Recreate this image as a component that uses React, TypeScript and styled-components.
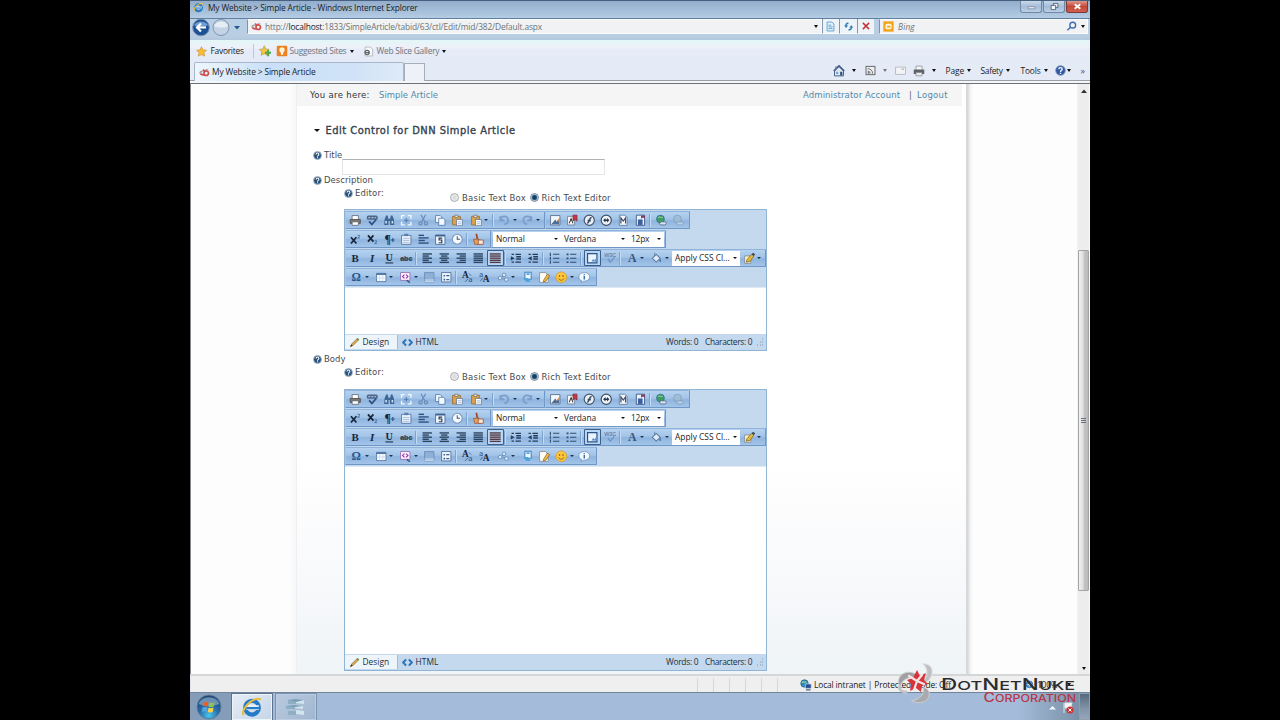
import React from "react";
import styled, { createGlobalStyle } from "styled-components";

const UI = `"Open Sans", "Noto Sans", sans-serif`;
const PAGE = `"DejaVu Sans", sans-serif`;

const Global = createGlobalStyle`
  * { box-sizing: border-box; }
  html, body { margin: 0; background: #000; overflow: hidden; }
  svg { display: block; flex: none; }
`;

const Screen = styled.div`
  width: 1280px;
  height: 720px;
  background: #000;
  display: flex;
  justify-content: center;
`;
const Desktop = styled.div`
  position: relative;
  width: 900px;
  height: 720px;
  display: flex;
  flex-direction: column;
  overflow: hidden;
  background: #fff;
  font-family: ${UI};
  font-size: 8.4px;
  color: #1b1b1b;
  white-space: nowrap;
`;
const Txt = styled.span<{ $w?: number; $size?: number; $ls?: number; $c?: string; $heavy?: boolean; $ml?: number }>`
  display: block;
  flex: none;
  line-height: 12px;
  width: ${(p) => (p.$w ? p.$w + "px" : "auto")};
  font-size: ${(p) => p.$size ?? 8.4}px;
  letter-spacing: ${(p) => p.$ls ?? 0}px;
  color: ${(p) => p.$c ?? "inherit"};
  ${(p) => p.$heavy && "-webkit-text-stroke: 0.35px currentColor;"}
  margin-left: ${(p) => p.$ml ?? 0}px;
`;
const Caret = styled.i<{ $c?: string; $s?: number; $ml?: number }>`
  flex: none;
  width: 0;
  height: 0;
  margin-left: ${(p) => p.$ml ?? 0}px;
  border: ${(p) => p.$s ?? 2.5}px solid transparent;
  border-top: ${(p) => (p.$s ?? 2.5) + 0.5}px solid ${(p) => p.$c ?? "#111"};
  border-bottom: 0;
`;

/* ---------- browser chrome ---------- */
const TitleBar = styled.div`
  height: 19px;
  flex: none;
  display: flex;
  align-items: flex-start;
  padding: 1px 2px 0 3px;
  border-top: 1px solid #46617f;
  border-bottom: 1px solid #61809f;
  background: linear-gradient(#93adcb, #b4cce4);
`;
const WinButtons = styled.div`
  margin-left: auto;
  margin-top: -1px;
  display: flex;
  gap: 1px;
`;
const WinButton = styled.div<{ $close?: boolean }>`
  width: 22px;
  height: 12px;
  display: flex;
  align-items: center;
  justify-content: center;
  border: 1px solid ${(p) => (p.$close ? "#7c3a36" : "#7189a5")};
  border-top: 0;
  border-radius: 0 0 3px 3px;
  background: ${(p) => (p.$close ? "linear-gradient(#dc9a8f,#c4483a 50%,#d0604c)" : "linear-gradient(#c9d9ea,#a5bdd8 50%,#bad0e6)")};
`;
const AddressRow = styled.div`
  height: 21px;
  flex: none;
  display: flex;
  align-items: flex-start;
  padding: 0 2px 0 1px;
  background: linear-gradient(#b8cfe6, #b9cee2 80%, #b3c8dc);
`;
const AddressBox = styled.div<{ $w: number; $ml?: number }>`
  width: ${(p) => p.$w}px;
  height: 15px;
  margin-left: ${(p) => p.$ml ?? 0}px;
  display: flex;
  align-items: center;
  padding-left: 3px;
  background: #f0f2f4;
  border: 1px solid #fbfdff;
  border-left-color: #7d93aa;
`;
const AddressButton = styled.div`
  width: 17.5px;
  height: 15px;
  display: flex;
  align-items: center;
  justify-content: center;
  background: #eef3f8;
  border-left: 1px solid #8197ad;
  border-bottom: 1px solid #fbfdff;
`;
const FavoritesRow = styled.div`
  height: 22px;
  flex: none;
  display: flex;
  align-items: center;
  padding: 0 0 0 6px;
  background: linear-gradient(#e3f7f7, #eef0fa 35%, #e5ebf7 45%, #e5ebf6);
`;
const Divider = styled.div<{ $ml?: number; $mr?: number; $h?: number; $c?: string }>`
  width: 1px;
  height: ${(p) => p.$h ?? 14}px;
  margin: 0 ${(p) => p.$mr ?? 0}px 0 ${(p) => p.$ml ?? 0}px;
  background: ${(p) => p.$c ?? "#bcc7d8"};
`;
const TabRow = styled.div`
  height: 22px;
  flex: none;
  display: flex;
  align-items: stretch;
  padding-left: 4px;
  background: #e5ebf6;
  border-bottom: 1px solid #6c7178;
  box-shadow: inset 0 -2px 0 #f4f6f8, inset 0 -3px 0 #9aa1a8;
`;
const Tab = styled.div`
  width: 210px;
  height: 19px;
  display: flex;
  align-items: center;
  padding-left: 4px;
  border: 1px solid #a8b6ca;
  border-bottom: 0;
  border-radius: 2px 2px 0 0;
  background: linear-gradient(90deg, #eef6fd, #c9e0f8 35%, #cfe2f7 75%, #dfeaf8);
`;
const NewTab = styled.div`
  width: 21px;
  height: 18px;
  margin-top: 1px;
  border: 1px solid #a5aebb;
  border-bottom: 0;
  background: #edf2f9;
`;
const Commands = styled.div`
  margin-left: auto;
  width: 257px;
  height: 17px;
  display: flex;
  align-items: center;
`;
const Slot = styled.div<{ $w: number }>`
  flex: none;
  width: ${(p) => p.$w}px;
  display: flex;
  align-items: center;
`;

/* ---------- page ---------- */
const Viewport = styled.div`
  height: 590px;
  flex: none;
  display: flex;
  border-left: 1px solid #85888c;
  border-right: 1px solid #fafafa;
  background: #fdfdfd;
`;
const LeftGutter = styled.div`
  width: 106px;
  flex: none;
  border-right: 1px solid #eeeff0;
  background: linear-gradient(90deg, #fdfdfd 94%, #f7f7f8);
`;
const Panel = styled.div`
  width: 669px;
  height: 590px;
  overflow: hidden;
  background: linear-gradient(#fff 64%, #f8f9fb 84%, #eff4f7);
  font-family: ${PAGE};
  font-size: 8.5px;
  color: #484c50;
`;
const RightGutter = styled.div`
  flex: 1;
  background: linear-gradient(90deg, #d6d7d8 0, #d9dadb 2px, #f1f1f1 4px, #fdfdfd 7px);
`;
const Scrollbar = styled.div`
  width: 12px;
  flex: none;
  display: flex;
  flex-direction: column;
  align-items: center;
  padding: 5px 0 4px;
  border-left: 1px solid #f3f3f3;
  background: #ededee;
`;
const ThumbTrack = styled.div`
  flex: 1;
  width: 100%;
  display: flex;
  flex-direction: column;
  padding-top: 157px;
`;
const Thumb = styled.div`
  height: 341px;
  width: 11px;
  border: 1px solid #a2a4a6;
  border-radius: 1px;
  display: flex;
  flex-direction: column;
  align-items: center;
  justify-content: center;
  gap: 1px;
  background: linear-gradient(90deg, #f2f2f2, #dedede 45%, #c2c3c5 60%, #b8babc);
`;
const Grip = styled.div`
  width: 5px;
  height: 1px;
  background: #6d7074;
`;
const Breadcrumb = styled.div`
  height: 22px;
  display: flex;
  align-items: center;
  padding-left: 13px;
  margin-right: 4px;
  background: #f5f5f6;
`;
const Heading = styled.div`
  height: 20px;
  margin-top: 14px;
  display: flex;
  align-items: center;
  padding: 1px 0 0 17px;
  color: #34424f;
`;
const LabelRow = styled.div<{ $left?: number; $h?: number; $top?: number }>`
  height: ${(p) => p.$h ?? 12}px;
  flex: none;
  display: flex;
  align-items: center;
  gap: 2.5px;
  padding-top: ${(p) => p.$top ?? 0}px;
  padding-left: ${(p) => p.$left ?? 15.5}px;
`;
const TitleField = styled.div`
  display: flex;
  height: 25px;
  margin-top: 9px;
`;
const TextInput = styled.div`
  width: 263px;
  height: 16px;
  margin-top: 10px;
  border: 1px solid #e3e5e7;
  border-top: 1px solid #b1b4b7;
  background: #fff;
`;
const EditorHead = styled.div<{ $h: number }>`
  height: ${(p) => p.$h}px;
  display: flex;
  align-items: flex-start;
  padding-left: 46.5px;
  margin-top: 1px;
`;
const RadioLine = styled.div`
  display: flex;
  align-items: center;
  height: 12px;
  margin-top: 5px;
`;
const Radio = styled.span<{ $on?: boolean }>`
  width: 9px;
  height: 9px;
  margin-top: -1px;
  border-radius: 50%;
  border: 1px solid ${(p) => (p.$on ? "#7d8b97" : "#a9adb1")};
  background: ${(p) => (p.$on ? "radial-gradient(circle, #173f63 0 1.8px, #6f9bbd 2.8px, #e4ebf0 3.4px)" : "radial-gradient(#d5d8da, #f2f3f4)")};
`;

/* ---------- rich text editor ---------- */
const EditorBox = styled.div<{ $h: number; $pad: number }>`
  width: 423px;
  height: ${(p) => p.$h}px;
  margin-left: 47px;
  padding-top: ${(p) => p.$pad}px;
  display: flex;
  flex-direction: column;
  border: 1px solid #8fb4d4;
  background: #c4d9ed;
`;
const ToolLine = styled.div`
  height: 19px;
  display: flex;
`;
const ToolGroup = styled.div<{ $w: number }>`
  width: ${(p) => p.$w}px;
  height: 18px;
  flex: none;
  display: flex;
  align-items: center;
  padding-left: 1px;
  border: 1px solid #7098c6;
  border-left-color: #a9c5e4;
  border-top-color: #8fb3da;
  border-radius: 1px;
  background: linear-gradient(#b5d2f0, #a3c4e8 45%, #8fb4de 55%, #a4c5ea);
`;
const ToolCell = styled.div<{ $w: number; $on?: boolean }>`
  flex: none;
  width: ${(p) => p.$w}px;
  height: 16px;
  display: flex;
  align-items: center;
  justify-content: center;
  ${(p) => p.$on && "box-shadow: inset 0 0 0 1px #3c5f8c; background: #b9d6f4; border-radius: 1px;"}
`;
const ToolSep = styled.div`
  flex: none;
  width: 4px;
  height: 13px;
  border-left: 1px solid #7da3cf;
  box-shadow: inset 1px 0 0 #c3dbf3;
`;
const Combo = styled.div<{ $w: number }>`
  flex: none;
  width: ${(p) => p.$w}px;
  height: 15px;
  display: flex;
  align-items: center;
  justify-content: space-between;
  padding: 0 3px 0 3px;
  background: #fff;
  color: #222;
  font-family: ${UI};
`;
const EditArea = styled.div`
  flex: 1;
  background: #fff;
  border-top: 1px solid #dfe9f2;
`;
const EditorFoot = styled.div`
  height: 16px;
  flex: none;
  display: flex;
  align-items: center;
  font-family: ${UI};
  color: #222f3d;
`;
const ModeTab = styled.div<{ $on?: boolean }>`
  height: 14px;
  width: ${(p) => (p.$on ? 53 : 50)}px;
  display: flex;
  align-items: center;
  gap: 2.5px;
  padding-left: 4px;
  border-right: ${(p) => (p.$on ? "1px solid #9dbbd8" : "0")};
  background: ${(p) => (p.$on ? "#edf4fa" : "transparent")};
`;

/* ---------- bottom ---------- */
const StatusBar = styled.div`
  height: 18px;
  flex: none;
  display: flex;
  align-items: center;
  padding-top: 1px;
  border-top: 2px solid #d5d6d8;
  border-left: 1px solid #dfe4ea;
  background: #efeff0;
`;
const TaskBar = styled.div`
  height: 28px;
  flex: none;
  display: flex;
  border-top: 1px solid #70849c;
  background: linear-gradient(90deg, #a4bcd9 92%, #8ba2bb 96%, #74899f);
`;
const StartArea = styled.div`
  width: 41px;
  display: flex;
  align-items: center;
  justify-content: center;
  padding-right: 4px;
  background: #869db9;
`;
const TaskButton = styled.div<{ $active?: boolean }>`
  width: 42px;
  margin-right: 2px;
  display: flex;
  align-items: center;
  justify-content: center;
  border: 1px solid ${(p) => (p.$active ? "#5d7390" : "#7c93af")};
  border-bottom: 0;
  box-shadow: inset 0 0 0 1px ${(p) => (p.$active ? "#eef4fa" : "#bccde0")};
  background: ${(p) => (p.$active ? "linear-gradient(135deg,#e6edf6,#c5d5e8)" : "linear-gradient(135deg,#b9cadf,#a0b6d0)")};
`;
const Tray = styled.div`
  margin-left: auto;
  width: 54px;
  display: flex;
  align-items: center;
  justify-content: flex-end;
  gap: 7px;
  padding: 2px 5px 0 0;
`;
const ShowDesktop = styled.div`
  width: 11px;
  border: 1px solid #8f9fb0;
  background: linear-gradient(#55687c, #8295a9 60%, #93a6ba);
`;

const Brand = styled.div`
  position: absolute;
  left: 706px;
  top: 660px;
  width: 194px;
  height: 48px;
  display: flex;
`;
const BrandWords = styled.div`
  flex: 1;
  padding-top: 18px;
`;
const BrandLine = styled.div<{ $c: string; $size: number; $sx: number; $lh: number }>`
  width: 100%;
  padding-right: 13px;
  text-align: right;
  font-family: "Inter", sans-serif;
  font-weight: 500;
  font-size: ${(p) => p.$size}px;
  line-height: ${(p) => p.$lh}px;
  color: ${(p) => p.$c};
  transform: scaleX(${(p) => p.$sx});
  transform-origin: 143px 50%;
  big { font-size: 1.25em; line-height: 1px; }
`;

/* ---------- icons ---------- */
const lines = (rows: [number, number][], c = "#2c4563", y0 = 2.5, gap = 2.7) =>
  rows.map(([x, w], i) => <path key={i} d={`M${x} ${y0 + i * gap}h${w}`} stroke={c} strokeWidth={1.8} />);

const glyph = (t: string, extra: React.SVGProps<SVGTextElement> = {}) => (
  <text x={8} y={12.5} textAnchor="middle" fontFamily="Liberation Serif, serif" fontWeight={700} fontSize={14} fill="#16263c" {...extra}>
    {t}
  </text>
);
const page = <path d="M3 1.5h7l3 3v10H3z" fill="#f5f9fe" stroke="#55749b" strokeWidth={1} />;

const art: Record<string, React.ReactNode> = {
  print: (<g><path d="M4 7V2h8v5" fill="#fff" stroke="#5b6672" /><path d="M1.500 7h13v5h-13z" fill="#80796f" stroke="#4c4a48" /><path d="M4 10h8v4.500H4z" fill="#fff" stroke="#5b6672" /></g>),
  spell: (<g><rect x={1} y={2} width={14} height={5.500} rx={2} fill="#4d668a" /><path d="M3 4.700h10" stroke="#a9bfdb" strokeDasharray="2.500 1.500" strokeWidth={1.600} /><path d="M4 9.500l3.500 4L13 7" fill="none" stroke="#2b4f80" strokeWidth={2.200} /></g>),
  find: (<g fill="#3f6694"><path d="M2 7l2-5h2l1 5v7H1.500zM14 7l-2-5h-2L9 7v7h5.500z" /><path d="M6.500 6h3v3h-3z" /><path d="M3 9h2v3H3zM11 9h2v3h-2z" fill="#cfe1f5" /></g>),
  select: (<g fill="none" stroke="#f2f8ff" strokeWidth={1.700}><path d="M2 6V2h4M10 2h4v4M14 10v4h-4M6 14H2v-4" /><path d="M5 8h6M8 5v6" stroke="#4f79ab" strokeWidth={1.200} /></g>),
  cut: (<g fill="none" stroke="#6a8cb8" strokeWidth={1.600}><path d="M5 1l5 9M11 1L6 10" /><circle cx={4.500} cy={12} r={2} /><circle cx={11.500} cy={12} r={2} /></g>),
  copy: (<g fill="#f4f9ff" stroke="#4c73a5"><path d="M2 2h6l2 2v7H2z" /><path d="M6 5.500h6l2 2v7H6z" /></g>),
  paste: (<g><path d="M2 3h10v11H2z" fill="#dca24c" stroke="#9c6a22" /><path d="M5 1.500h4v3H5z" fill="#f2e6c8" stroke="#777" /><path d="M7 7h7.500v8H7z" fill="#fff" stroke="#5d7698" /><path d="M8.500 10h4.500M8.500 12.500h4.500" stroke="#8da7c6" /></g>),
  undo: (<path d="M3 8a5 5 0 1 1 5 5M3 3v5h5" fill="none" stroke="#7b9dca" strokeWidth={2.400} />),
  redo: (<path d="M13 8a5 5 0 1 0-5 5M13 3v5H8" fill="none" stroke="#7b9dca" strokeWidth={2.400} />),
  image: (<g><path d="M2 2h12v12H2z" fill="#f3f8fd" stroke="#4d6180" /><path d="M3 13l5-6 2 3 3-4v7z" fill="#4f6d95" /><path d="M10 9l4-5v6z" fill="#d98b4a" /></g>),
  docs: (<g><path d="M2 3h9v11H2z" fill="#fbfdff" stroke="#65748c" /><path d="M9 1.500h5V9l-2.500-2L9 9z" fill="#c23a48" stroke="#8c2430" /><path d="M4 12l2.500-6L9 12" fill="none" stroke="#333" strokeWidth={1.300} /></g>),
  flash: (<g><circle cx={8} cy={8} r={6.500} fill="#e8eff7" stroke="#43546b" strokeWidth={1.500} /><path d="M5.500 12C8 11 8 4.500 11 4.500M6 8.500h4" fill="none" stroke="#36475e" strokeWidth={2} /></g>),
  media: (<g><circle cx={8} cy={8} r={6.500} fill="#f0f4f9" stroke="#3d4d64" strokeWidth={1.500} /><path d="M4 8l3-3v2h2V5l3 3-3 3V9H7v2z" fill="#25364e" /></g>),
  template: (<g>{page}<path d="M5 12V5l3 4 3-4v7" fill="none" stroke="#40506b" strokeWidth={1.600} /></g>),
  save: (<g><path d="M3 1.500h10.500v13H3z" fill="#eef3fa" stroke="#2c4776" /><path d="M5 14V7h6v7" fill="#3c5fa2" /><path d="M9 2h5v4l-2.500-1.500L9 6z" fill="#7b3e66" /></g>),
  link: (<g><circle cx={7} cy={6.500} r={5} fill="#3f9d62" stroke="#2a6f9a" /><path d="M4 5c2-3 4 1 6-1" stroke="#bfe8c4" fill="none" /><rect x={6} y={10} width={8.500} height={4} rx={2} fill="#d9e4f0" stroke="#47617f" /></g>),
  unlink: (<g opacity={0.750}><circle cx={7} cy={6.500} r={5} fill="#a1bbcf" stroke="#6e93b4" /><rect x={6} y={10} width={8.500} height={4} rx={2} fill="#c3d6e8" stroke="#6b8fb3" /></g>),
  sup: (<g><path d="M2.500 5.500l7 8M9.500 5.500l-7 8" stroke="#16263c" strokeWidth={2.200} /><path d="M11 3h2.500v1.500L11 6.500h3" fill="none" stroke="#3b679a" /></g>),
  sub: (<g><path d="M2.500 3l7 8M9.500 3l-7 8" stroke="#16263c" strokeWidth={2.200} /><path d="M11 10h2.500v1.500L11 13.500h3" fill="none" stroke="#3b679a" /></g>),
  para: (<g>{glyph("¶", { x: 6, fontSize: 15 })}<path d="M10 9h5M12.500 6.500v5" stroke="#35567f" strokeWidth={1.500} /></g>),
  pasteText: (<g><path d="M2 3h12v11.500H2z" fill="#e9f1fa" stroke="#456a9e" /><path d="M5.500 1h5v3h-5z" fill="#5a7eb0" /><path d="M4 7h8M4 9.500h8M4 12h8" stroke="#9db7d6" /></g>),
  hr: (<g>{lines([[2, 7], [2, 13], [2, 8], [2, 13]], "#2d527f", 3, 3.300)}</g>),
  date: (<g><path d="M2 2.500h12v12H2z" fill="#f2f7fd" stroke="#3c6090" /><path d="M2 3.500h12" stroke="#3c6090" strokeWidth={2} /><path d="M10.500 6.500H6.500v2.500h3.500v3.500H6" fill="none" stroke="#273c5c" strokeWidth={1.500} /></g>),
  time: (<g><circle cx={8} cy={8} r={6.300} fill="#f6fafe" stroke="#7793b6" strokeWidth={1.300} /><path d="M8 4v4h3.500" fill="none" stroke="#335784" strokeWidth={1.300} /></g>),
  clean: (<g><path d="M5.500 1l1.500 7" stroke="#a04a2e" strokeWidth={2.200} /><path d="M2 8h7l2 6.500H3.500z" fill="#e3a25b" stroke="#9d5a2c" /><path d="M8 9h6.500v5.500H8z" fill="#f7e9dd" stroke="#a14f35" /></g>),
  bold: glyph("B"),
  italic: glyph("I", { fontStyle: "italic" }),
  underline: (<g>{glyph("U", { y: 11, fontSize: 13 })}<path d="M3 14h10" stroke="#16263c" strokeWidth={1.300} /></g>),
  strike: (<g><text x={8} y={12} textAnchor="middle" fontSize={9} fontWeight={700} fontFamily="Liberation Sans, sans-serif" fill="#2b3a50">abc</text><path d="M0 9h16" stroke="#2b3a50" /></g>),
  left: <g>{lines([[2, 12], [2, 8], [2, 12], [2, 8], [2, 12]])}</g>,
  center: <g>{lines([[2, 12], [4, 8], [2, 12], [4, 8], [2, 12]])}</g>,
  right: <g>{lines([[2, 12], [6, 8], [2, 12], [6, 8], [2, 12]])}</g>,
  full: <g>{lines([[2, 12], [2, 12], [2, 12], [2, 12], [2, 12]])}</g>,
  none: <g>{lines([[1, 14], [1, 14], [1, 14], [1, 14], [1, 14]], "#553a44")}</g>,
  indent: (<g><path d="M2 3h3M7 3h7M8 6h6M8 9h6M2 13h3M7 13h7" stroke="#243c5c" strokeWidth={1.800} /><path d="M1 5.500L6 8l-5 3z" fill="#243c5c" /></g>),
  outdent: (<g><path d="M2 3h3M7 3h7M8 6h6M8 9h6M2 13h3M7 13h7" stroke="#243c5c" strokeWidth={1.800} /><path d="M6 5.500L1 8l5 3z" fill="#243c5c" /></g>),
  ol: (<g stroke="#304c70"><path d="M6.500 3h8M6.500 8h8M6.500 13h8" strokeWidth={1.300} /><path d="M3 1v4M3 6v4M3 11v4" strokeWidth={1.400} /></g>),
  ul: (<g><path d="M6.500 3h8M6.500 8h8M6.500 13h8" stroke="#304c70" strokeWidth={1.300} /><path d="M2 2h2.500v2.200H2zM2 7h2.500v2.200H2zM2 12h2.500v2.200H2z" fill="#304c70" /></g>),
  borders: (<g><path d="M2 2h12v12H2z" fill="#eaf4ff" stroke="#2a5488" strokeWidth={1.500} /><path d="M7 12l2-3 2 1.500 3-4v6z" fill="#6592c6" /></g>),
  xhtml: (<g><text x={8} y={7} textAnchor="middle" fontSize={7} fontFamily="Liberation Sans, sans-serif" fill="#4b6c96">W3C</text><path d="M5 9l3 4 5-6" stroke="#7195c3" strokeWidth={1.800} fill="none" /></g>),
  fore: glyph("A", { fill: "#37557d", fontSize: 15 }),
  back: (<g><path d="M3 8l5-5 5 5-5 5z" fill="#e2ecf7" stroke="#53769f" strokeWidth={1.300} /><path d="M13 8c2 3 1 5 0 5s-1.500-2 0-5z" fill="#4b79ac" /><path d="M6 5V1" stroke="#53769f" /></g>),
  brush: (<g><path d="M2 5h8v9.500H2z" fill="#f9eec1" stroke="#7c8898" /><path d="M5 10l6-7 3 2-5 7-5 1z" fill="#e5b93f" stroke="#7c6838" /><path d="M11 3l2-2 2.500 2-2 2z" fill="#3c4858" /></g>),
  omega: glyph("Ω", { fill: "#23588e", fontSize: 15 }),
  table: (<g><path d="M2 3h12v10.500H2z" fill="#f6faff" stroke="#456b9b" /><path d="M2 4h12" stroke="#456b9b" strokeWidth={2} /><path d="M6 5v8.500M10 5v8.500M2 9h12" stroke="#c1d4e9" strokeWidth={0.800} /></g>),
  code: (<g><path d="M2 2h12v10H2z" fill="#fbf4fd" stroke="#8964ad" /><path d="M7 4.500L4.500 7 7 9.500M9 4.500L11.500 7 9 9.500" fill="none" stroke="#a32cae" strokeWidth={1.400} /><path d="M10 12l4 3" stroke="#35567f" strokeWidth={1.800} /></g>),
  group: (<g><path d="M2 2h12v12H2z" fill="#8fb0d6" stroke="#6487b4" /><path d="M2 11.500h12M2 13.500h12" stroke="#dce9f7" /></g>),
  form: (<g><path d="M2 2h12v12H2z" fill="#eff5fc" stroke="#3c6294" /><path d="M4.500 5h2v2h-2zM4.500 10h2v2h-2z" fill="#3c6294" /><path d="M8 6h4M8 11h4" stroke="#3c6294" strokeWidth={1.500} /></g>),
  upper: (<g>{glyph("A", { x: 5.5, y: 9.5, fontSize: 12 })}<text x={12} y={14.500} textAnchor="middle" fontSize={9} fill="#2f5179">a</text><path d="M9 10l-4 4M10 3l3 3" stroke="#335a86" /></g>),
  lower: (<g>{glyph("A", { x: 10.5, y: 13.5, fontSize: 12 })}<text x={4} y={7.500} textAnchor="middle" fontSize={9} fill="#2f5179">a</text><path d="M6 9l-3 4" stroke="#335a86" /></g>),
  snippets: (<g fill="#dceaf7" stroke="#5f84b0"><circle cx={4} cy={9} r={2.300} /><circle cx={9} cy={5} r={2.300} /><circle cx={12} cy={11} r={2.300} /><path d="M6 7.500l1.500-1M7 10h3" /></g>),
  module: (<g><path d="M5 1.500h8v9H5z" fill="#f0f8ff" stroke="#3d82bf" strokeWidth={1.300} /><path d="M7 4h4" stroke="#4a96d5" strokeWidth={2} /><path d="M3 9l4 5h5l-3-5z" fill="#4ba4dc" /></g>),
  edit: (<g><path d="M2 2h8l3 4v8.500H2z" fill="#fffdf4" stroke="#808890" /><path d="M7 12l5-8 3 2-5 7-3 1z" fill="#f0b842" stroke="#8b6a30" /></g>),
  smile: (<g><circle cx={8} cy={8} r={6.800} fill="#ffc83a" stroke="#dc9722" /><circle cx={5.800} cy={6.500} r={1} fill="#6b4814" /><circle cx={10.200} cy={6.500} r={1} fill="#6b4814" /><path d="M4.500 9.500c1.500 3 5.500 3 7 0" fill="none" stroke="#6b4814" /></g>),
  about: (<g><path d="M8 2c4 0 7 2 7 5.500S12 13 8 13H7l-3 2 .5-3C2 11.500 1 9.500 1 7.500 1 4 4 2 8 2z" fill="#f3f9ff" stroke="#6d90ba" /><path d="M8 4v1.500M8 6.500v4.500" stroke="#2b64a4" strokeWidth={1.700} /></g>),
  help: (<g><circle cx={8} cy={8} r={7} fill="#27517b" stroke="#a9bccb" strokeWidth={1.500} /><path d="M5.500 6c0-3 5-3 5 0 0 2-2.500 1.500-2.500 4M8 11.300v1.700" fill="none" stroke="#fff" strokeWidth={1.800} /></g>),
  pencil: (<g><path d="M2 14l2-4 8-8 2.200 2-8 8z" fill="#dfa94b" stroke="#846238" strokeWidth={0.900} /><path d="M2 14l1.200-3 2 1.800z" fill="#222" /><path d="M11 3l1.500-1.500 2.200 2L13.300 5z" fill="#5e8f4a" /></g>),
  html: (<path d="M6 3.500L1.800 8 6 12.500M10 3.500L14.200 8 10 12.500" fill="none" stroke="#2f76b8" strokeWidth={3} />),
  ie: (<g><circle cx={8} cy={8.500} r={5} fill="none" stroke="#257bc5" strokeWidth={3} /><path d="M4 8.500h9" stroke="#fff" strokeWidth={3.400} /><path d="M4 8.800h9.800" stroke="#257bc5" strokeWidth={1.800} /><path d="M2 14C-1 10 9 0 14.500 2.500" fill="none" stroke="#e9bd3d" strokeWidth={1.500} /></g>),
  dnn: (<g fill="none" stroke="#cf4b4b" strokeWidth={2.400}><circle cx={10.500} cy={9} r={3.300} /><path d="M6 3.500L8 6" /><path d="M1.500 9.500a3 3 0 0 1 4-3" stroke="#a2a4a8" /><path d="M9.500 3.800a3 3 0 0 1 4 1" stroke="#b3b5b9" strokeWidth={1.500} /><path d="M2 10l5 2" /></g>),
  star: (<path d="M8 1l2.200 4.600 5 .7-3.600 3.500.9 5L8 12.500l-4.500 2.300.9-5L.8 6.300l5-.7z" fill="#f8bd35" stroke="#c98a24" strokeWidth={0.800} />),
  starAdd: (<g><path d="M7 1l2 4.300 4.500.6-3.200 3.200.7 4.600L7 11.500l-4 2.200.7-4.600L.5 5.900 5 5.300z" fill="#f4c545" stroke="#a69238" strokeWidth={0.800} /><path d="M8 9h3V6.500h2.500V9H16v2.700h-2.500V15H11v-3.300H8z" fill="#4aa84a" /></g>),
  suggested: (<g><rect x={1} y={1} width={14} height={14} rx={1.500} fill="#ee8020" /><circle cx={8} cy={6.500} r={3.500} fill="#fff3d4" /><path d="M6.500 9h3v4h-3z" fill="#fff" /></g>),
  slice: (<g><path d="M3 1.500h8l3 3v10H3z" fill="#f9fafb" stroke="#a1a5ab" /><circle cx={6} cy={9.500} r={3} fill="none" stroke="#5b6067" strokeWidth={1.900} /><path d="M4 9.500h5" stroke="#5b6067" strokeWidth={1.500} /></g>),
  compat: (<g><path d="M3 1.500h7l3 3v10H3z" fill="#e2f2fc" stroke="#5d9bca" strokeWidth={1.300} /><path d="M5 6h4M5 8.500h6M5 11h6" fill="none" stroke="#5d9bca" strokeWidth={1.300} /></g>),
  refresh: (<g fill="none" stroke="#347cb9" strokeWidth={2.200}><path d="M8 3.500C5 3 4 5 4.500 8" /><path d="M8 12.500c3 1 5-1.500 4-5" /><path d="M1.500 6.500h6L4.500 10zM9 9.500h6L12 6z" fill="#347cb9" stroke="none" /></g>),
  stop: (<path d="M3 3l10 10M13 3L3 13" stroke="#c5343b" strokeWidth={2.300} />),
  bing: (<g><rect x={0.500} y={0.500} width={15} height={15} fill="#f5a51d" /><rect x={3.500} y={4} width={9} height={8} rx={2.500} fill="#fff6df" /><rect x={6} y={7} width={5} height={2.500} fill="#f5a51d" /></g>),
  search: (<g fill="none" stroke="#3c6db0" strokeWidth={2}><circle cx={9.800} cy={6} r={4.200} /><path d="M6.500 9L2 13.500" /></g>),
  zoom: (<g><circle cx={7} cy={7} r={5.500} fill="#4d95d3" stroke="#2f6aa8" /><path d="M4 7h6M7 4v6" stroke="#fff" strokeWidth={1.500} /><path d="M11 11l3.500 3.500" stroke="#7f8790" strokeWidth={2.400} /></g>),
  home: (<g><path d="M2 8l6-6 6 6v6.500H2z" fill="#dfe7f2" stroke="#44618c" strokeWidth={1.300} /><path d="M1 8l7-7 7 7" fill="none" stroke="#3d5a87" strokeWidth={2} /><path d="M4 2v4" stroke="#6b7688" strokeWidth={2} /><path d="M9.500 9h3v5h-3z" fill="#31517e" /><path d="M4 9h3v3H4z" fill="#7fa3cf" /></g>),
  feed: (<g><rect x={1.500} y={2} width={13} height={12} fill="#eeeeee" stroke="#6a6c70" strokeWidth={1.500} /><path d="M4 5.500a6.500 6.500 0 0 1 7 7M4 9a3.300 3.300 0 0 1 3.500 3.500" fill="none" stroke="#6a6c70" strokeWidth={1.400} /><circle cx={5} cy={11.500} r={1.200} fill="#6a6c70" /></g>),
  mail: (<g><rect x={1} y={3} width={14} height={10.500} fill="#f3f4f6" stroke="#a4a8ad" /><path d="M9.500 6h3.500" stroke="#a4a8ad" strokeWidth={1.600} /></g>),
  printer: (<g><path d="M4 6V1.500h8V6" fill="#f8f8f8" stroke="#878a8f" /><path d="M1 6h14v6H1z" fill="#5d6268" /><path d="M4 10h8v4.500H4z" fill="#e9eaec" stroke="#878a8f" /></g>),
  helpBig: (<g><circle cx={8} cy={8} r={7} fill="#3059a8" stroke="#8194b5" strokeWidth={1.200} /><path d="M5.500 6c0-3 5-3 5 0 0 2-2.500 1.500-2.500 4M8 11.300v1.700" fill="none" stroke="#fff" strokeWidth={1.900} /></g>),
  intranet: (<g><circle cx={6} cy={6} r={5} fill="#2e8bb8" stroke="#1d5d95" /><path d="M2.500 5c2-3 4 1 6-1.500" stroke="#a5dd8c" strokeWidth={1.500} fill="none" /><rect x={7} y={6.500} width={8} height={6} rx={1} fill="#2b4d96" stroke="#d4e0ee" /><path d="M8 14.500h6" stroke="#456" strokeWidth={1.500} /></g>),
  restore: (<g fill="#f2f6fa" stroke="#4a5c72" strokeWidth={1.500}><path d="M6 2.500h8v7H6z" /><path d="M2 6h8v7.500H2z" /></g>),
  close: (<path d="M3 4l10 8M13 4L3 12" stroke="#fff" strokeWidth={3} />),
  minimize: (<path d="M2 8.500h12v3.500H2z" fill="#f8fafc" stroke="#53667e" />),
};

const Icon = ({ n, s = 12 }: { n: string; s?: number }) => (
  <svg width={s} height={s} viewBox="0 0 16 16">{art[n]}</svg>
);

type Tool = { n: string; w: number; on?: boolean; menu?: boolean };
const t = (n: string, w = 17, on?: boolean): Tool => ({ n, w, on });
const m = (n: string, w: number): Tool => ({ n, w, menu: true });
const SEP: Tool = { n: "|", w: 4 };

const Tools = ({ items }: { items: Tool[] }) => (
  <>
    {items.map((it, i) =>
      it.n === "|" ? (
        <ToolSep key={i} />
      ) : (
        <ToolCell key={i} $w={it.w} $on={it.on}>
          <Icon n={it.n} s={12.5} />
          {it.menu && <Caret $s={2} $ml={2} $c="#1c3352" />}
        </ToolCell>
      )
    )}
  </>
);

const RichEditor = ({ height, pad = 0 }: { height: number; pad?: number }) => (
  <EditorBox $h={height} $pad={pad}>
    <ToolLine>
      <ToolGroup $w={200}>
        <Tools items={[t("print"), t("spell"), t("find"), t("select"), t("cut"), t("copy"), t("paste"), m("paste", 26), SEP, m("undo", 23), m("redo", 23)]} />
      </ToolGroup>
      <ToolGroup $w={145}>
        <Tools items={[t("image"), t("docs"), t("flash"), t("media"), t("template"), t("save"), SEP, t("link"), t("unlink")]} />
      </ToolGroup>
    </ToolLine>
    <ToolLine>
      <ToolGroup $w={146}>
        <Tools items={[t("sup"), t("sub"), t("para"), t("pasteText"), t("hr"), t("date"), t("time"), SEP, t("clean")]} />
      </ToolGroup>
      <ToolGroup $w={175}>
        <Combo $w={68}><Txt $ls={-0.1}>Normal</Txt><Caret $s={2} /></Combo>
        <Combo $w={67}><Txt $ls={-0.1}>Verdana</Txt><Caret $s={2} /></Combo>
        <Combo $w={36}><Txt $ls={-0.2}>12px</Txt><Caret $s={2} /></Combo>
      </ToolGroup>
    </ToolLine>
    <ToolLine>
      <ToolGroup $w={421}>
        <Tools items={[t("bold"), t("italic"), t("underline"), t("strike"), SEP, t("left"), t("center"), t("right"), t("full"), t("none", 17, true), SEP, t("indent"), t("outdent"), SEP, t("ol"), t("ul"), SEP, t("borders", 17, true), t("xhtml", 18), SEP, m("fore", 24), m("back", 25)]} />
        <Combo $w={68}><Txt $ls={0}>Apply CSS Cl...</Txt><Caret $s={2} /></Combo>
        <Tools items={[m("brush", 24)]} />
      </ToolGroup>
    </ToolLine>
    <ToolLine>
      <ToolGroup $w={252}>
        <Tools items={[m("omega", 25), m("table", 24), m("code", 25), t("group"), t("form"), SEP, t("upper"), t("lower"), m("snippets", 26), t("module"), t("edit"), m("smile", 23), t("about")]} />
      </ToolGroup>
    </ToolLine>
    <EditArea />
    <EditorFoot>
      <ModeTab $on><Icon n="pencil" s={11} /><Txt>Design</Txt></ModeTab>
      <ModeTab><Icon n="html" s={11} /><Txt $ls={0.1}>HTML</Txt></ModeTab>
      <Txt $w={39} $ml={218} $ls={-0.28}>Words: 0</Txt>
      <Txt $w={51} $ls={-0.33}>Characters: 0</Txt>
      <svg width={8} height={8} viewBox="0 0 8 8"><path d="M6 1h1M4 4h1M6 4h1M1 7h1M4 7h1M6 7h1" stroke="#7f9ab7" strokeWidth={1.200} /></svg>
    </EditorFoot>
  </EditorBox>
);

const EditorHeader = ({ h }: { h: number }) => (
  <EditorHead $h={h}>
    <LabelRow $left={0}><Icon n="help" s={9} /><Txt $w={95} $size={8.5} $ls={0.15}>Editor:</Txt></LabelRow>
    <RadioLine>
      <Radio /><Txt $w={68} $ml={3} $size={8.5} $ls={0.22}>Basic Text Box</Txt>
      <Radio $on /><Txt $ml={2.5} $size={8.5} $ls={0.2}>Rich Text Editor</Txt>
    </RadioLine>
  </EditorHead>
);

export default function App() {
  return (
    <Screen>
      <Global />
      <Desktop>
        <TitleBar>
          <Icon n="ie" s={11} />
          <Txt $ml={4} $ls={-0.17}>My Website &gt; Simple Article - Windows Internet Explorer</Txt>
          <WinButtons>
            <WinButton><Icon n="minimize" s={9} /></WinButton>
            <WinButton><Icon n="restore" s={9} /></WinButton>
            <WinButton $close><Icon n="close" s={9} /></WinButton>
          </WinButtons>
        </TitleBar>
        <AddressRow>
          <svg width={56} height={18} viewBox="0 0 56 18">
            <circle cx={10} cy={8.500} r={8.300} fill="#1d4f94" stroke="#7490b0" />
            <path d="M3 6a8 7 0 0 1 14 0c-4 3-9 3-14 0z" fill="#6e9bd0" />
            <path d="M15 8.500H6M10 4.500L6 8.500l4 4" fill="none" stroke="#fff" strokeWidth={2.200} />
            <circle cx={30} cy={8.500} r={8} fill="#c3d3e4" stroke="#7f95ad" />
            <path d="M23 7a7.500 6.500 0 0 1 14 0c-4 2-9 2-14 0z" fill="#e5edf5" />
            <path d="M43 7h6l-3 3.500z" fill="#245a91" />
          </svg>
          <AddressBox $w={575}>
            <Icon n="dnn" s={11} />
            <Txt $w={549} $ml={3} $c="#6d7276" $ls={-0.155}>http://<span style={{ color: "#222" }}>localhost</span>:1833/SimpleArticle/tabid/63/ctl/Edit/mid/382/Default.aspx</Txt>
            <Caret />
          </AddressBox>
          <AddressButton><Icon n="compat" s={11} /></AddressButton>
          <AddressButton><Icon n="refresh" s={11} /></AddressButton>
          <AddressButton><Icon n="stop" s={10} /></AddressButton>
          <AddressBox $w={209} $ml={5}>
            <Icon n="bing" s={11} />
            <Txt $w={168} $ml={4} $c="#70757a" $ls={0.1}><i>Bing</i></Txt>
            <Icon n="search" s={11} />
            <Caret $ml={4} />
          </AddressBox>
        </AddressRow>
        <FavoritesRow>
          <Icon n="star" s={11} />
          <Txt $w={37} $ml={3.5} $ls={-0.25}>Favorites</Txt>
          <Divider $ml={5} $mr={5} />
          <Icon n="starAdd" s={12} />
          <Slot $w={5} />
          <Icon n="suggested" s={12} />
          <Txt $w={59} $ml={2} $c="#6f757d" $ls={-0.27}>Suggested Sites</Txt>
          <Caret $ml={1.5} />
          <Slot $w={8.5} />
          <Icon n="slice" s={11} />
          <Txt $w={65.5} $ml={3} $c="#6f757d" $ls={-0.23}>Web Slice Gallery</Txt>
          <Caret $ml={0} />
        </FavoritesRow>
        <TabRow>
          <Tab><Icon n="dnn" s={11} /><Txt $ml={2} $ls={-0.15}>My Website &gt; Simple Article</Txt></Tab>
          <NewTab />
          <Commands>
            <Slot $w={19}><Icon n="home" s={12} /></Slot>
            <Slot $w={13}><Caret /></Slot>
            <Slot $w={18}><Icon n="feed" s={11} /></Slot>
            <Slot $w={12}><Caret $c="#777" /></Slot>
            <Slot $w={18}><Icon n="mail" s={11} /></Slot>
            <Slot $w={19}><Icon n="printer" s={12} /></Slot>
            <Slot $w={13.5}><Caret /></Slot>
            <Slot $w={35}><Txt $w={20} $ls={-0.1}>Page</Txt><Caret $ml={1} /></Slot>
            <Slot $w={40}><Txt $w={24} $ls={-0.3}>Safety</Txt><Caret $ml={1.5} /></Slot>
            <Slot $w={34}><Txt $w={22} $ls={-0.15}>Tools</Txt><Caret $ml={1.5} /></Slot>
            <Slot $w={26}><Icon n="helpBig" s={11} /><Caret $ml={1.5} /></Slot>
            <Slot $w={8}><Txt $c="#555" $size={9} style={undefined}>»</Txt></Slot>
          </Commands>
        </TabRow>
        <Viewport>
          <LeftGutter />
          <Panel>
            <Breadcrumb>
              <Txt $w={69} $size={8.5} $ls={0.3} $c="#30353a">You are here:</Txt>
              <Txt $w={424} $size={8.5} $c="#5089aa">Simple Article</Txt>
              <Txt $w={106} $size={8.5} $ls={0.1} $c="#5089aa">Administrator Account</Txt>
              <Txt $w={8} $size={8.5} $c="#666">|</Txt>
              <Txt $size={8.5} $ls={0.3} $c="#5089aa">Logout</Txt>
            </Breadcrumb>
            <Heading>
              <Caret $s={3} />
              <Txt $ml={5.5} $size={9.9} $ls={0.52} $heavy>Edit Control for DNN Simple Article</Txt>
            </Heading>
            <TitleField>
              <LabelRow><Icon n="help" s={9} /><Txt $w={18} $size={8.5}>Title</Txt></LabelRow>
              <TextInput />
            </TitleField>
            <LabelRow><Icon n="help" s={9} /><Txt $size={8.5} $ls={0.05}>Description</Txt></LabelRow>
            <EditorHeader h={22} />
            <RichEditor height={142} pad={1} />
            <LabelRow $h={14} $top={2}><Icon n="help" s={9} /><Txt $size={8.5}>Body</Txt></LabelRow>
            <EditorHeader h={23} />
            <RichEditor height={282} />
          </Panel>
          <RightGutter />
          <Scrollbar>
            <svg width={6} height={4} viewBox="0 0 6 4"><path d="M0 4l3-3.500L6 4z" fill="#333" /></svg>
            <ThumbTrack><Thumb><Grip /><Grip /><Grip /></Thumb></ThumbTrack>
            <Caret />
          </Scrollbar>
        </Viewport>
        <StatusBar>
          <Slot $w={506} />
          <Divider $mr={15} $c="#d6d7d9" /><Divider $mr={15} $c="#d6d7d9" /><Divider $mr={15} $c="#d6d7d9" /><Divider $mr={15} $c="#d6d7d9" /><Divider $mr={15} $c="#d6d7d9" /><Divider $mr={15} $c="#d6d7d9" />
          <Slot $w={7} />
          <Icon n="intranet" s={12} />
          <Txt $w={211} $ml={2} $ls={-0.13}>Local intranet | Protected Mode: Off</Txt>
          <Icon n="zoom" s={10} />
          <Txt $w={30} $ml={2} $ls={-0.2}>100%</Txt>
          <Caret />
        </StatusBar>
        <TaskBar>
          <StartArea>
            <svg width={26} height={26} viewBox="0 0 26 26">
              <defs><radialGradient id="orb" cx="50%" cy="85%" r="80%"><stop offset="0" stopColor="#49c6ea" /><stop offset=".5" stopColor="#2a6cab" /><stop offset="1" stopColor="#204671" /></radialGradient></defs>
              <circle cx={13} cy={13} r={12} fill="url(#orb)" stroke="#5c7c9c" />
              <path d="M2.500 10a11 9.500 0 0 1 21 0c-7 2.500-14 2.500-21 0z" fill="#a5c1da" opacity={0.550} />
              <path d="M7.500 8.500q2.500-1.500 5-.3l-.8 4.300q-2.500-1-5 .3z" fill="#e8602c" />
              <path d="M13.500 8.500q2.500 1 5-.3l-.8 4.300q-2.500 1.200-5 .2z" fill="#8fc549" />
              <path d="M6.500 13.800q2.500-1.300 5-.3l-.8 4.300q-2.500-1-5 .3z" fill="#4fa8e4" />
              <path d="M12.500 13.800q2.500 1 5-.2l-.8 4.300q-2.500 1.200-5 .2z" fill="#fbd045" />
            </svg>
          </StartArea>
          <TaskButton $active><Icon n="ie" s={22} /></TaskButton>
          <TaskButton>
            <svg width={22} height={20} viewBox="0 0 22 20">
              <path d="M3 3h8v4H3zM1 9h9v3H1zM3 14h8v4H3z" fill="#8fb0c4" />
              <path d="M11 2l8 1v4l-8-1zM10 8l8 1v3l-8-1zM11 13l8 1v4l-8-1z" fill="#d2e4ee" />
              <path d="M3 3l8-1 8 1-8 2zM1 9l9-1 8 1-8 1z" fill="#7a9db5" />
            </svg>
          </TaskButton>
          <Tray>
            <svg width={7} height={5} viewBox="0 0 7 5"><path d="M0 4.500L3.500 1 7 4.500z" fill="#f3f7fb" /></svg>
            <svg width={11} height={12} viewBox="0 0 11 12"><path d="M1 1v10M2 1h7l-1 3 1 2H2z" fill="#f7f7f7" stroke="#dfe5eb" /><circle cx={7} cy={8} r={3.500} fill="#cc3434" /><path d="M5.500 6.500l3 3M8.500 6.500l-3 3" stroke="#fff" /></svg>
          </Tray>
          <ShowDesktop />
        </TaskBar>
        <Brand>
          <svg width={42} height={46} viewBox="0 0 42 46">
            <g fill="none" strokeLinecap="round">
              <path d="M27 4c9-1 12 8 6 16-2 2-5 3-7 1 6-3 7-12 1-17z" fill="#bfc0c2" stroke="#dcdcdd" />
              <path d="M4 27C-1 17 8 10 17 13c4 1 6 4 5 6-6-4-16-1-18 8z" fill="#9fa0a3" stroke="#c9cacb" />
              <path d="M16 41c9 5 19-1 17-9-1-3-4-5-6-4 2 6-3 11-11 13z" fill="#a9aaad" stroke="#cfd0d1" />
              <path d="M3 27c1 4 4 5 7 5" stroke="#c3c4c5" strokeWidth={3} />
              <path d="M21 10l3 6 6-3-2 7 4 4-6 2-1 6-5-4-6 3 1-7-4-4 6-2z" fill="#d8343b" />
              <path d="M13 16l8 5 5-6M21 21l-3 9M21 21l7 3" stroke="#f6e7e6" strokeWidth={2.200} />
            </g>
          </svg>
          <BrandWords>
            <BrandLine $c="#2b2b2d" $size={12.3} $sx={1.46} $lh={15}><big>D</big>OT<big>N</big>ET<big>N</big>UKE</BrandLine>
            <BrandLine $c="#b8354a" $size={10} $sx={1.24} $lh={11}><big>C</big>ORPORATION</BrandLine>
          </BrandWords>
        </Brand>
      </Desktop>
    </Screen>
  );
}
